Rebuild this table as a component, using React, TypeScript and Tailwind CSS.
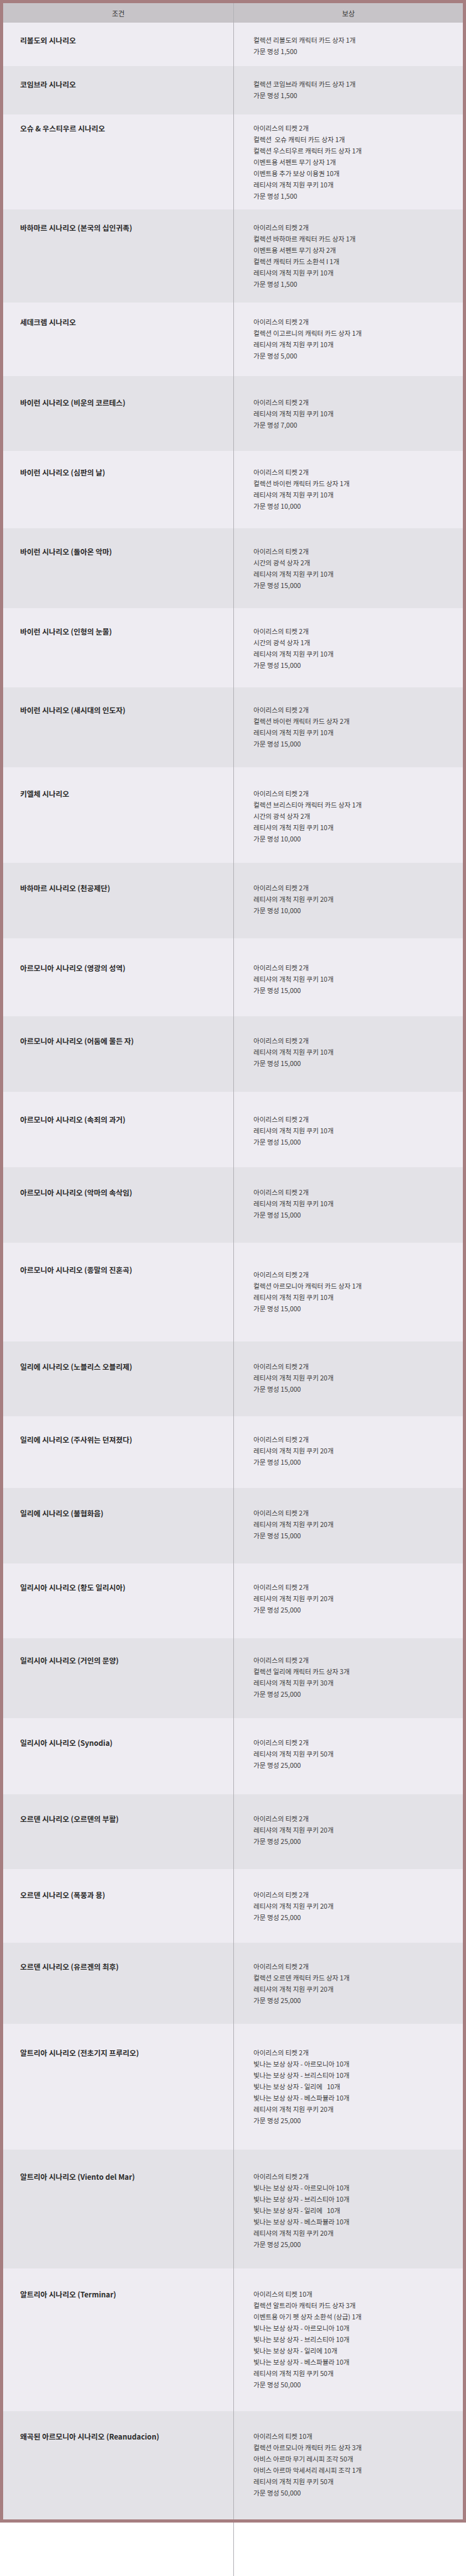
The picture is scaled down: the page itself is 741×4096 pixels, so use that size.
type Row = {
  title: string;
  h: string;
  pt: string;
  leftPt?: string;
  items: string[];
};

const ticket = "아이리스의 티켓 2개";
const cookie = (n: number) => `레티샤의 개척 지원 쿠키 ${n}개`;
const fame = (v: string) => `가문 명성 ${v}`;

const shining = (ilie: string) => [
  "빛나는 보상 상자 - 아르모니아 10개",
  "빛나는 보상 상자 - 브리스티아 10개",
  `빛나는 보상 상자 - 일리에${ilie}10개`,
  "빛나는 보상 상자 - 베스파뷸라 10개",
];

const rows: Row[] = [
  { title: "리볼도외 시나리오", h: "h-[69px]", pt: "pt-[19px]", items: ["컬렉션 리볼도외 캐릭터 카드 상자 1개", fame("1,500")] },
  { title: "코임브라 시나리오", h: "h-[77px]", pt: "pt-[20px]", items: ["컬렉션 코임브라 캐릭터 카드 상자 1개", fame("1,500")] },
  {
    title: "오슈 & 우스티우르 시나리오",
    h: "h-[151px]",
    pt: "pt-[13px]",
    items: [
      ticket,
      "컬렉션  오슈 캐릭터 카드 상자 1개",
      "컬렉션 우스티우르 캐릭터 카드 상자 1개",
      "이벤트용 서펜트 무기 상자 1개",
      "이벤트용 추가 보상 이용권 10개",
      cookie(10),
      fame("1,500"),
    ],
  },
  {
    title: "바하마르 시나리오 (본국의 십인귀족)",
    h: "h-[148px]",
    pt: "pt-[20px]",
    items: [
      ticket,
      "컬렉션 바하마르 캐릭터 카드 상자 1개",
      "이벤트용 서펜트 무기 상자 2개",
      "컬렉션 캐릭터 카드 소환석 I 1개",
      cookie(10),
      fame("1,500"),
    ],
  },
  {
    title: "세데크렘 시나리오",
    h: "h-[117px]",
    pt: "pt-[22px]",
    items: [ticket, "컬렉션 이고르니의 캐릭터 카드 상자 1개", cookie(10), fame("5,000")],
  },
  { title: "바이런 시나리오 (비운의 코르테스)", h: "h-[119px]", pt: "pt-[33px]", items: [ticket, cookie(10), fame("7,000")] },
  {
    title: "바이런 시나리오 (심판의 날)",
    h: "h-[123px]",
    pt: "pt-[25px]",
    items: [ticket, "컬렉션 바이런 캐릭터 카드 상자 1개", cookie(10), fame("10,000")],
  },
  {
    title: "바이런 시나리오 (돌아온 악마)",
    h: "h-[127px]",
    pt: "pt-[28px]",
    items: [ticket, "시간의 광석 상자 2개", cookie(10), fame("15,000")],
  },
  {
    title: "바이런 시나리오 (인형의 눈물)",
    h: "h-[126px]",
    pt: "pt-[28px]",
    items: [ticket, "시간의 광석 상자 1개", cookie(10), fame("15,000")],
  },
  {
    title: "바이런 시나리오 (새시대의 인도자)",
    h: "h-[127px]",
    pt: "pt-[27px]",
    items: [ticket, "컬렉션 바이런 캐릭터 카드 상자 2개", cookie(10), fame("15,000")],
  },
  {
    title: "키엘체 시나리오",
    h: "h-[152px]",
    pt: "pt-[33px]",
    items: [ticket, "컬렉션 브리스티아 캐릭터 카드 상자 1개", "시간의 광석 상자 2개", cookie(10), fame("10,000")],
  },
  { title: "바하마르 시나리오 (천공제단)", h: "h-[120px]", pt: "pt-[31px]", items: [ticket, cookie(20), fame("10,000")] },
  { title: "아르모니아 시나리오 (영광의 성역)", h: "h-[124px]", pt: "pt-[38px]", items: [ticket, cookie(10), fame("15,000")] },
  { title: "아르모니아 시나리오 (어둠에 물든 자)", h: "h-[120px]", pt: "pt-[30px]", items: [ticket, cookie(10), fame("15,000")] },
  { title: "아르모니아 시나리오 (속죄의 과거)", h: "h-[120px]", pt: "pt-[35px]", items: [ticket, cookie(10), fame("15,000")] },
  { title: "아르모니아 시나리오 (악마의 속삭임)", h: "h-[120px]", pt: "pt-[31px]", items: [ticket, cookie(10), fame("15,000")] },
  {
    title: "아르모니아 시나리오 (종말의 진혼곡)",
    h: "h-[157px]",
    pt: "pt-[42px]",
    leftPt: "pt-[34px]",
    items: [ticket, "컬렉션 아르모니아 캐릭터 카드 상자 1개", cookie(10), fame("15,000")],
  },
  { title: "일리에 시나리오 (노블리스 오블리제)", h: "h-[119px]", pt: "pt-[31px]", items: [ticket, cookie(20), fame("15,000")] },
  { title: "일리에 시나리오 (주사위는 던져졌다)", h: "h-[114px]", pt: "pt-[28px]", items: [ticket, cookie(20), fame("15,000")] },
  { title: "일리에 시나리오 (불협화음)", h: "h-[120px]", pt: "pt-[31px]", items: [ticket, cookie(20), fame("15,000")] },
  { title: "일리시아 시나리오 (황도 일리시아)", h: "h-[119px]", pt: "pt-[29px]", items: [ticket, cookie(20), fame("25,000")] },
  {
    title: "일리시아 시나리오 (거인의 문양)",
    h: "h-[127px]",
    pt: "pt-[26px]",
    items: [ticket, "컬렉션 일리에 캐릭터 카드 상자 3개", cookie(30), fame("25,000")],
  },
  { title: "일리시아 시나리오 (Synodia)", h: "h-[121px]", pt: "pt-[30px]", items: [ticket, cookie(50), fame("25,000")] },
  { title: "오르덴 시나리오 (오르덴의 부활)", h: "h-[119px]", pt: "pt-[30px]", items: [ticket, cookie(20), fame("25,000")] },
  { title: "오르덴 시나리오 (폭풍과 용)", h: "h-[117px]", pt: "pt-[32px]", items: [ticket, cookie(20), fame("25,000")] },
  {
    title: "오르덴 시나리오 (유르겐의 최후)",
    h: "h-[129px]",
    pt: "pt-[29px]",
    items: [ticket, "컬렉션 오르덴 캐릭터 카드 상자 1개", cookie(20), fame("25,000")],
  },
  {
    title: "알트리아 시나리오 (전초기지 프루리오)",
    h: "h-[200px]",
    pt: "pt-[37px]",
    items: [ticket, ...shining("   "), cookie(20), fame("25,000")],
  },
  {
    title: "알트리아 시나리오 (Viento del Mar)",
    h: "h-[189px]",
    pt: "pt-[34px]",
    items: [ticket, ...shining("   "), cookie(20), fame("25,000")],
  },
  {
    title: "알트리아 시나리오 (Terminar)",
    h: "h-[227px]",
    pt: "pt-[32px]",
    items: [
      "아이리스의 티켓 10개",
      "컬렉션 알트리아 캐릭터 카드 상자 3개",
      "이벤트용 아기 펫 상자 소환석 (상급) 1개",
      ...shining(" "),
      cookie(50),
      fame("50,000"),
    ],
  },
  {
    title: "왜곡된 아르모니아 시나리오 (Reanudacion)",
    h: "h-[172px]",
    pt: "pt-[31px]",
    items: [
      "아이리스의 티켓 10개",
      "컬렉션 아르모니아 캐릭터 카드 상자 3개",
      "아비스 아르마 무기 레시피 조각 50개",
      "아비스 아르마 악세서리 레시피 조각 1개",
      cookie(50),
      fame("50,000"),
    ],
  },
];

const App = () => {
  return (
    <div className="min-h-screen w-[741px] bg-white font-['Noto_Sans_CJK_KR','Noto_Sans',sans-serif]">
      <div className="border-[5px] border-[#a67e80]">
        {/* header */}
        <div className="grid h-[31px] grid-cols-[366px_1fr] bg-[#c7c4c8] text-[11px] leading-[18px] text-[#333]">
          <div className="flex items-center justify-center">조건</div>
          <div className="flex items-center justify-center border-l border-[#b2b1b6]">보상</div>
        </div>

        {rows.map((row, i) => (
          <div
            key={row.title}
            className={`grid grid-cols-[366px_1fr] ${row.h} ${i % 2 === 0 ? "bg-[#eeecf2]" : "bg-[#e3e2e7]"}`}
          >
            <div className={`pl-[27px] text-[11.7px] font-bold leading-[18px] text-[#2b2b2b] ${row.leftPt ?? row.pt}`}>
              {row.title}
            </div>
            <div className={`border-l border-[#b2b1b6] pl-[31px] text-[10.5px] leading-[18px] text-[#3a3a3a] ${row.pt}`}>
              {row.items.map((item, j) => (
                <p key={j} className="whitespace-pre">
                  {item}
                </p>
              ))}
            </div>
          </div>
        ))}
      </div>
      <div className="ml-[371px] h-[85px] border-l border-[#b2b1b6]" />
    </div>
  );
};

export default App;
